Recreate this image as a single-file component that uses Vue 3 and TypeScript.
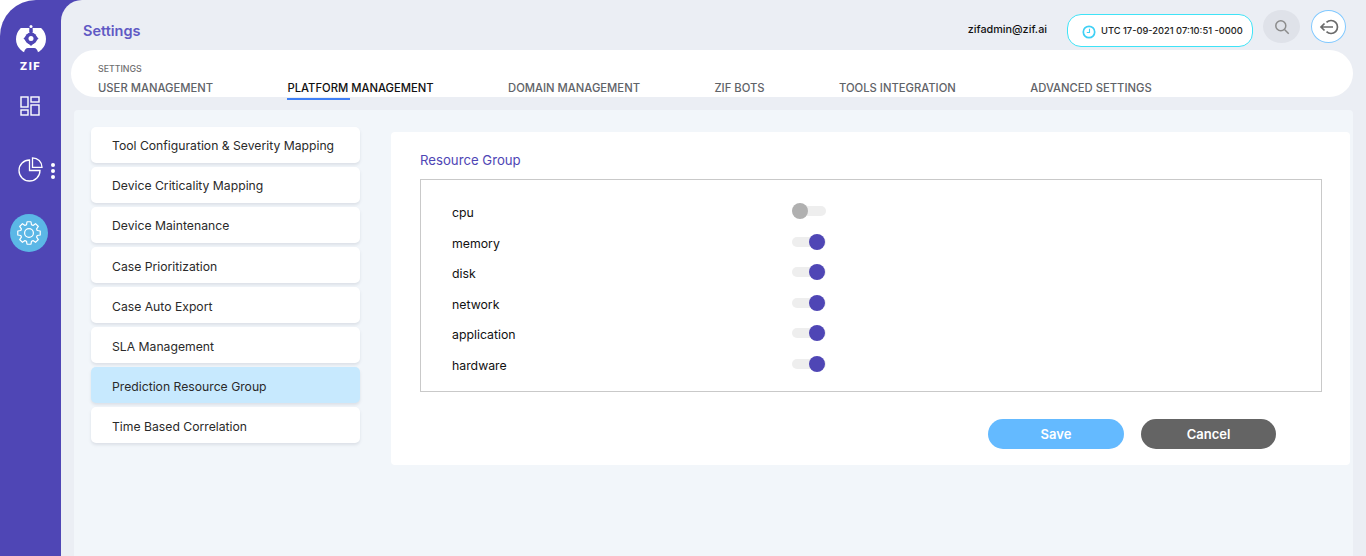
<script setup lang="ts">
const tabs = [
  { label: "USER MANAGEMENT", active: false },
  { label: "PLATFORM MANAGEMENT", active: true },
  { label: "DOMAIN MANAGEMENT", active: false },
  { label: "ZIF BOTS", active: false },
  { label: "TOOLS INTEGRATION", active: false },
  { label: "ADVANCED SETTINGS", active: false },
];

const menu = [
  { label: "Tool Configuration & Severity Mapping", active: false },
  { label: "Device Criticality Mapping", active: false },
  { label: "Device Maintenance", active: false },
  { label: "Case Prioritization", active: false },
  { label: "Case Auto Export", active: false },
  { label: "SLA Management", active: false },
  { label: "Prediction Resource Group", active: true },
  { label: "Time Based Correlation", active: false },
];

const groups = [
  { name: "cpu", on: false },
  { name: "memory", on: true },
  { name: "disk", on: true },
  { name: "network", on: true },
  { name: "application", on: true },
  { name: "hardware", on: true },
];

// 8 teeth gear outline for the settings icon
const gearPath = () => {
  const pt = (r: number, deg: number) => {
    const a = (deg * Math.PI) / 180;
    return `${(12 + r * Math.cos(a)).toFixed(2)} ${(12 + r * Math.sin(a)).toFixed(2)}`;
  };
  let d = "";
  for (let i = 0; i < 8; i++) {
    const c = i * 45 - 90;
    d += `${i ? "L" : "M"}${pt(8.6, c - 17)} L${pt(11.4, c - 10)} L${pt(11.4, c + 10)} L${pt(8.6, c + 17)} `;
  }
  return d + "Z";
};
</script>

<template>
  <div class="page">
    <aside class="sidebar">
      <svg class="logo" width="30" height="30" viewBox="0 0 30 30">
        <circle cx="15" cy="15" r="15" fill="#fff" />
        <path d="M0 0h30v4H0z" fill="#4f46b5" />
        <path d="M13.500 0h3l.3 8h-3.600z" fill="#4f46b5" />
        <circle cx="15" cy="2.500" r="1.500" fill="#fff" />
        <path d="M15 7l7.500 7.500-7.500 7.500-7.500-7.500z" fill="#4f46b5" />
        <circle cx="15" cy="14.500" r="6" fill="#4f46b5" />
        <circle cx="15" cy="14.500" r="2.500" fill="#fff" />
        <path d="M8 30v-1c0-3 2-5 4-5h6c2 0 4 2 4 5v1z" fill="#4f46b5" />
      </svg>
      <div class="logo-text">ZIF</div>
      <svg class="nav-icon" width="20" height="20" viewBox="0 0 20 20" fill="none" stroke="#fff" stroke-width="1.400">
        <rect x="1" y="1" width="7" height="10" />
        <rect x="11" y="1" width="8" height="5" />
        <rect x="1" y="14" width="7" height="5" />
        <rect x="11" y="9" width="8" height="10" />
      </svg>
      <div class="nav-chart">
        <svg width="25" height="25" viewBox="0 0 25 25" fill="none" stroke="#fff" stroke-width="1.300">
          <path d="M11.500 3a10.500 10.500 0 1 0 10.500 10.500H11.500z" />
          <path d="M14.500 .8a9.500 9.500 0 0 1 9.500 9.500h-9.500z" />
        </svg>
        <span class="dots"><i></i><i></i><i></i></span>
      </div>
      <div class="nav-active">
        <svg width="24" height="24" viewBox="0 0 24 24" fill="none" stroke="#fff" stroke-width="1.200" stroke-linejoin="round">
          <circle cx="12" cy="12" r="4.400" />
          <path :d="gearPath()" />
        </svg>
      </div>
    </aside>

    <div class="main-wrap">
      <main class="main">
        <header class="topbar">
          <div class="title">Settings</div>
          <div class="email">zifadmin@zif.ai</div>
          <div class="clock">
            <svg width="14" height="14" viewBox="0 0 14 14" fill="none" stroke="#3fd0f5" stroke-width="1.700">
              <circle cx="7" cy="7" r="5.700" />
              <path d="M7.500 3.800v3.700H4.800" stroke-width="1.100" />
            </svg>
            <span>UTC 17-09-2021 07:10:51 -0000</span>
          </div>
          <div class="search">
            <svg width="16" height="16" viewBox="0 0 16 16" fill="none" stroke="#8b8b8b" stroke-width="1.500">
              <circle cx="6.800" cy="6.800" r="5" />
              <path d="M10.500 10.500l4.200 4.200" />
            </svg>
          </div>
          <div class="logout">
            <svg width="20" height="16" viewBox="0 0 20 16" fill="none" stroke="#6a6a6a" stroke-width="1.700">
              <path d="M7.500 3.300a6.500 6.500 0 1 1 0 9.400" />
              <path d="M14 8H2M5.500 4.500L2 8l3.500 3.500" />
            </svg>
          </div>
        </header>

        <nav class="tabbar">
          <div class="crumb">SETTINGS</div>
          <div class="tabs">
            <div v-for="t in tabs" :key="t.label" class="tab" :class="{ active: t.active }">{{ t.label }}</div>
          </div>
        </nav>

        <section class="content">
          <ul class="menu">
            <li v-for="m in menu" :key="m.label" :class="{ active: m.active }">{{ m.label }}</li>
          </ul>

          <div class="panel">
            <h3>Resource Group</h3>
            <div class="box">
              <div v-for="g in groups" :key="g.name" class="row">
                <span class="name">{{ g.name }}</span>
                <span class="switch" :class="{ on: g.on }"><i></i></span>
              </div>
            </div>
            <div class="actions">
              <button class="save">Save</button>
              <button class="cancel">Cancel</button>
            </div>
          </div>
        </section>
      </main>
    </div>
  </div>
</template>

<style>
html,
body {
  margin: 0;
  background: #fff;
}
</style>

<style scoped>
.page {
  display: flex;
  width: 1366px;
  height: 556px;
  overflow: hidden;
  font-family: Inter, "Liberation Sans", sans-serif;
  background: #fff;
}

.sidebar {
  flex: 0 0 61px;
  display: flex;
  flex-direction: column;
  align-items: center;
  background: #4f46b5;
  border-top-left-radius: 36px;
  padding-top: 24px;
  box-sizing: border-box;
}

.logo-text {
  margin-top: 5px;
  color: #fff;
  font-size: 11px;
  font-weight: 800;
  letter-spacing: 1.500px;
  line-height: 14px;
}

.nav-icon {
  margin-top: 23px;
  margin-right: 1px;
}

.nav-chart {
  position: relative;
  margin-top: 41px;
  height: 25px;
}

.dots {
  position: absolute;
  left: 33px;
  top: 6px;
  display: flex;
  flex-direction: column;
  gap: 2px;
}

.dots i {
  width: 4px;
  height: 4px;
  border-radius: 50%;
  background: #fff;
}

.nav-active {
  margin-top: 32px;
  margin-right: 3px;
  width: 38px;
  height: 38px;
  border-radius: 50%;
  background: #5bb7e6;
  display: flex;
  align-items: center;
  justify-content: center;
}

.main-wrap {
  flex: 1;
  min-width: 0;
  display: flex;
  background: #4f46b5;
}

.main {
  flex: 1;
  min-width: 0;
  display: flex;
  flex-direction: column;
  background: #ebeef4;
  border-top-left-radius: 21px;
}

.topbar {
  height: 50px;
  display: flex;
  align-items: flex-start;
  padding-left: 22px;
}

.title {
  margin-top: 21px;
  margin-right: auto;
  font-size: 14.500px;
  font-weight: 600;
  line-height: 20px;
  color: #5f59c4;
}

.email {
  margin-top: 23px;
  font-size: 10.800px;
  font-weight: 500;
  line-height: 14px;
  color: #111;
}

.clock {
  margin-top: 14px;
  margin-left: 20px;
  width: 186px;
  height: 33px;
  box-sizing: border-box;
  display: flex;
  align-items: center;
  gap: 5px;
  padding-left: 14px;
  background: #fff;
  border: 1px solid #3fe3f7;
  border-radius: 14px;
  font-size: 9.300px;
  font-weight: 500;
  color: #222;
}

.clock svg {
  margin-top: 3px;
}

.search {
  margin-top: 10px;
  margin-left: 10px;
  width: 37px;
  height: 33px;
  border-radius: 50%;
  background: #dfe2e9;
  display: flex;
  align-items: center;
  justify-content: center;
}

.logout {
  margin-top: 10px;
  margin-left: 11px;
  margin-right: 20px;
  width: 35px;
  height: 33px;
  box-sizing: border-box;
  border-radius: 50%;
  background: #fff;
  border: 1px solid #7fc8ff;
  display: flex;
  align-items: center;
  justify-content: center;
}

.tabbar {
  height: 47px;
  margin-left: 10px;
  margin-right: 13px;
  box-sizing: border-box;
  padding: 13px 0 0 27px;
  background: #fff;
  border-radius: 24px;
}

.crumb {
  font-size: 8.800px;
  font-weight: 500;
  line-height: 11px;
  color: #6f6f6f;
}

.tabs {
  display: flex;
  gap: 74.400px;
  margin-top: 6.500px;
}

.tab {
  position: relative;
  font-size: 11.250px;
  font-weight: 500;
  line-height: 15px;
  color: #5f6368;
}

.tab.active {
  color: #111;
}

.tab.active::after {
  content: "";
  position: absolute;
  left: 0;
  bottom: -4px;
  width: 63px;
  height: 2px;
  background: #3f7ff5;
}

.content {
  flex: 1;
  margin: 13px 13px 0 13px;
  display: flex;
  align-items: flex-start;
  gap: 31px;
  padding: 17px 3px 0 17px;
  background: #f2f6fa;
  border-radius: 4px 4px 0 0;
}

.menu {
  flex: 0 0 269px;
  list-style: none;
  margin: 0;
  padding: 0;
  display: flex;
  flex-direction: column;
  gap: 4.050px;
}

.menu li {
  height: 36px;
  box-sizing: border-box;
  padding: 0.380px 0 0 21px;
  line-height: 37.500px;
  font-size: 12.200px;
  color: #2a2a2a;
  background: #fff;
  border-radius: 5px;
  box-shadow: 0 2px 3px rgba(120, 130, 150, 0.18);
}

.menu li.active {
  background: #c7e9fe;
}

.panel {
  flex: 1;
  min-width: 0;
  height: 333px;
  margin-top: 5px;
  box-sizing: border-box;
  padding: 20px 28px 0 29px;
  background: #fff;
  border-radius: 4px;
}

.panel h3 {
  margin: 0;
  font-size: 13.200px;
  font-weight: 400;
  line-height: 17px;
  color: #4f46b5;
}

.box {
  margin-top: 10px;
  height: 213px;
  box-sizing: border-box;
  padding-top: 17.400px;
  border: 1px solid #c9c9c9;
}

.row {
  height: 30.500px;
  display: flex;
  align-items: center;
  padding-left: 31px;
  font-size: 12.300px;
  color: #111;
}

.name {
  width: 340px;
}

.switch {
  position: relative;
  width: 34px;
  height: 10px;
  margin-bottom: 2.600px;
  border-radius: 5px;
  background: #eeeeee;
}

.switch i {
  position: absolute;
  left: 0;
  top: -3px;
  width: 16px;
  height: 16px;
  border-radius: 50%;
  background: #b0b0b0;
}

.switch.on i {
  left: auto;
  right: 1px;
  background: #4f46b5;
}

.actions {
  display: flex;
  gap: 17px;
  justify-content: flex-end;
  margin-top: 27px;
  padding-right: 46px;
}

.actions button {
  width: 136px;
  height: 30px;
  border: 0;
  border-radius: 15px;
  font-family: inherit;
  font-size: 13px;
  font-weight: 600;
  color: #fff;
}

.save {
  background: #64baff;
}

.actions .cancel {
  width: 135px;
  background: #646464;
}
</style>
